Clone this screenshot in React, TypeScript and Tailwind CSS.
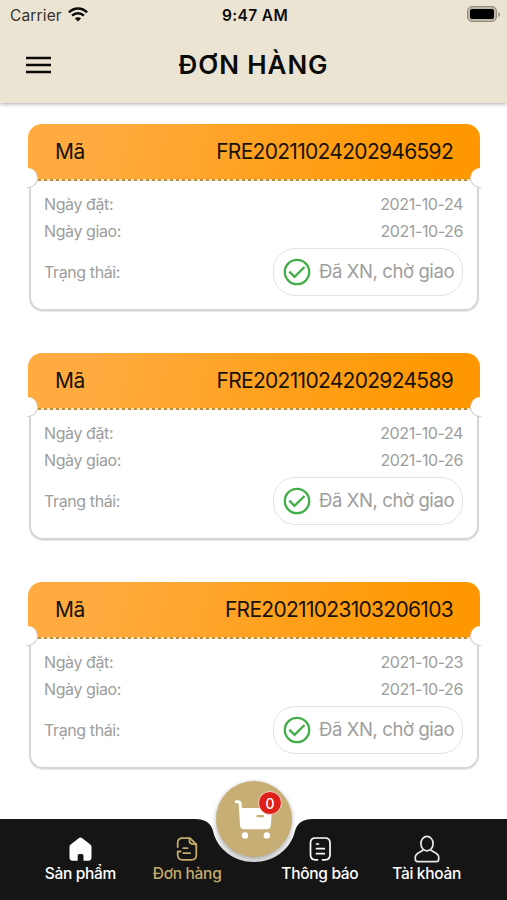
import React from "react";

interface Order {
    code: string,
    orderDate: string,
    shipDate: string,
    status: string,
}

const orders: Order[] = [
    { code: "FRE20211024202946592", orderDate: "2021-10-24", shipDate: "2021-10-26", status: "Đã XN, chờ giao" },
    { code: "FRE20211024202924589", orderDate: "2021-10-24", shipDate: "2021-10-26", status: "Đã XN, chờ giao" },
    { code: "FRE20211023103206103", orderDate: "2021-10-23", shipDate: "2021-10-26", status: "Đã XN, chờ giao" },
];

const WifiIcon = () => (
    <svg width="20" height="15" viewBox="0 0 20 15" fill="none" stroke="#0b0b09" strokeWidth="2.5">
        <path d="M0.9 5.3C6 0.1 14 0.1 19.1 5.3" />
        <path d="M4.1 8.7C7.4 5.4 12.6 5.4 15.9 8.7" />
        <path d="M10 14.6L6.9 11.4C8.6 9.8 11.4 9.8 13.1 11.4Z" fill="#0b0b09" stroke="none" />
    </svg>
);

const MenuIcon = () => (
    <svg width="25" height="18" viewBox="0 0 25 18" stroke="#0b0b09" strokeWidth="2.4">
        <path d="M0 2H25M0 9H25M0 16H25" />
    </svg>
);

const StatusBar = () => (
    <div className="flex h-[30px] items-center">
        <div className="flex flex-1 items-center gap-[6px] pl-[10px] text-[15.5px] tracking-[0.15px] text-[#35322c]">
            <span className="pt-px">Carrier</span>
            <div className="pb-px"><WifiIcon /></div>
        </div>
        <div className="pt-px text-[15.5px] font-semibold tracking-[0.35px]">9:47 AM</div>
        <div className="flex flex-1 items-center justify-end gap-px pr-[7px] pb-[2px]">
            <div className="h-4 w-[30px] rounded-[5px] border border-[#928b7e] bg-[#bdb6a7] p-[2px]">
                <div className="h-full rounded-[2px] bg-black" />
            </div>
            <div className="h-[5px] w-[2px] rounded-r-full bg-[#a8a193]" />
        </div>
    </div>
);

const Header = () => (
    <header className="h-[103px] bg-[#ece4d3] shadow-[0_1px_4px_rgba(0,0,0,0.35)]">
        <StatusBar />
        <div className="flex h-[70px] items-center px-[26px]">
            <button><MenuIcon /></button>
            <h1 className="flex-1 pr-[25px] pb-[2px] text-center text-[26px] font-semibold tracking-[0.9px]">ĐƠN HÀNG</h1>
        </div>
    </header>
);

const CheckIcon = () => (
    <svg width="28" height="28" viewBox="0 0 28 28" fill="none" stroke="#43ae49" strokeWidth="2.3">
        <circle cx="14" cy="14" r="12.2" />
        <path d="M6.3 13.6L11.5 18.8L21.5 9" />
    </svg>
);

const OrderCard = ({ code, orderDate, shipDate, status }: Order) => (
    <article className="relative h-[187px] w-[452px] text-[16px] leading-[27px] text-[#9d9d9d]">
        <div className="flex h-[56px] items-center justify-between rounded-t-[14px] bg-linear-[105deg] from-[#ffab40] from-15% to-[#ff9800] to-90% px-[27px] pb-[2px] text-[21px] text-[#17120a]">
            <span className="tracking-[-0.4px]">Mã</span>
            <span className="tracking-[-0.7px]">{code}</span>
        </div>
        <div className="mx-px h-[131px] rounded-b-[14px] border-x-2 border-b-2 border-[#d6d6d6] pt-[11px] pr-[14px] pl-[13px] shadow-[0_1px_1px_rgba(0,0,0,0.1)]">
            <div className="flex justify-between">
                <span className="tracking-[-0.4px]">Ngày đặt:</span>
                <span className="tracking-[-0.4px]">{orderDate}</span>
            </div>
            <div className="flex justify-between">
                <span className="tracking-[-0.4px]">Ngày giao:</span>
                <span className="tracking-[-0.4px]">{shipDate}</span>
            </div>
            <div className="mt-[3px] flex items-center justify-between">
                <span className="tracking-[-0.4px]">Trạng thái:</span>
                <div className="flex h-[48px] w-[190px] items-center gap-[8px] rounded-[22px] border-[1.5px] border-[#e3e3e3] pl-[9px] text-[18.5px] whitespace-nowrap">
                    <CheckIcon />
                    <span className="pb-[2px] tracking-[-0.4px]">{status}</span>
                </div>
            </div>
        </div>
        <div className="absolute top-[55px] right-[10px] left-[10px] h-[2px] bg-[repeating-linear-gradient(90deg,#b98f3c_0_3px,#f3e3c4_3px_6px)]" />
        {/* punched ticket holes */}
        <div className="absolute top-[44px] left-[-1px] h-[20px] w-[11px] rounded-r-full border-r border-b border-[#d2cdc5] bg-white" />
        <div className="absolute top-[44px] right-[-1px] h-[20px] w-[11px] rounded-l-full border-b border-l border-[#d2cdc5] bg-white" />
    </article>
);

const HomeIcon = () => (
    <svg width="28" height="28" viewBox="0 0 28 28" fill="#fff">
        <path d="M14.5 2.5C15.2 2.5 15.7 2.8 16.3 3.3L24 9.2C25 10 25.5 10.8 25.5 12V22.5C25.5 24.4 24.5 25.8 22.5 25.8H17.5V20.5C17.5 18.6 11.7 18.6 11.7 20.5V25.8H6.5C4.5 25.8 3.5 24.4 3.5 22.5V12C3.5 10.8 4 10 5 9.2L12.7 3.3C13.3 2.8 13.8 2.5 14.5 2.5Z" />
    </svg>
);

const OrderIcon = () => (
    <svg width="28" height="28" viewBox="0 0 28 28" fill="none" stroke="#c4ab6b" strokeWidth="1.8" strokeLinecap="round" strokeLinejoin="round">
        <path d="M4.7 12V8Q4.7 3.2 9.5 3.2H17L23.3 9.5V20Q23.3 24.8 18.5 24.8H9.5Q4.7 24.8 4.7 20V16.5H7.5" />
        <path d="M16.5 3.5V6Q16.5 8.8 19.1 8.8L23 9.5" />
        <path d="M10.3 13.2H14.5M10.3 18.2H17" />
    </svg>
);

const NoticeIcon = () => (
    <svg width="28" height="28" viewBox="0 0 28 28" fill="none" stroke="#fff" strokeWidth="1.7" strokeLinecap="round">
        <path d="M11.5 24.8H9.5Q4.5 24.8 4.5 19.8V8Q4.5 3 9.5 3H19Q24 3 24 8V19.8Q24 24.8 19 24.8H16.5" />
        <path d="M10.5 9H12.5M10.5 13.7H18.3M10.5 18.7H18.3" />
    </svg>
);

const UserIcon = () => (
    <svg width="28" height="28" viewBox="0 0 28 28" fill="none" stroke="#e8e8e8" strokeWidth="1.7" strokeLinejoin="round">
        <ellipse cx="14" cy="8.6" rx="6.1" ry="7.2" />
        <path d="M10.3 14.5C9.5 17 2.3 17.5 2.3 22V24Q2.3 26.6 4.6 26.6H23.4Q25.7 26.6 25.7 24V22C25.7 17.5 18.5 17 17.7 14.5" />
    </svg>
);

const CartIcon = () => (
    <svg width="40" height="42" viewBox="0 0 40 42" fill="#fff">
        <path d="M2.2 3.8H3.6Q6.3 3.8 6.4 6.6V11" fill="none" stroke="#fff" strokeWidth="3" strokeLinecap="round" />
        <path d="M4.9 10H38L36.8 27.5Q36.5 31.3 33 31.3H10Q6.4 31.3 6.1 27.5Z" />
        <path d="M23.5 18.2H29" stroke="#c7ae74" strokeWidth="2.3" strokeLinecap="round" />
        <circle cx="11" cy="37.5" r="3.2" />
        <circle cx="32.8" cy="37.5" r="3.2" />
    </svg>
);

interface TabProps {
    name: string,
    active?: boolean,
    children: React.ReactNode,
}

const Tab = ({ name, active, children }: TabProps) => (
    <div className={`flex w-[107px] flex-col items-center text-[15.5px] leading-[20px] font-medium tracking-[-0.3px] ${active ? "text-[#c4ab6b]" : "text-white"}`}>
        {children}
        <span className="pt-px whitespace-nowrap">{name}</span>
    </div>
);

const BottomBar = () => (
    <nav className="relative h-[81px] shrink-0 bg-[#151515]">
        {/* cradle under the cart button */}
        <svg className="absolute top-0 left-[190px]" width="130" height="46" viewBox="0 0 130 46">
            <defs>
                <linearGradient id="cradle" x1="0" y1="0" x2="0" y2="1">
                    <stop offset="0.1" stopColor="#fff" />
                    <stop offset="1" stopColor="#d9d9d9" />
                </linearGradient>
            </defs>
            <path d="M0 0H5C15 0 21 4 23 12C27 30 44 43 64 43C84 43 101 30 105 12C107 4 113 0 123 0Z" fill="url(#cradle)" />
        </svg>
        <div className="relative flex px-[27px] pt-[16px]">
            <Tab name="Sản phẩm"><HomeIcon /></Tab>
            <Tab name="Đơn hàng" active><OrderIcon /></Tab>
            <div className="w-[26px]" />
            <Tab name="Thông báo"><NoticeIcon /></Tab>
            <Tab name="Tài khoản"><UserIcon /></Tab>
        </div>
        <button className="absolute top-[-38px] left-[216px] flex h-[76px] w-[76px] items-center justify-center rounded-full bg-[#c7ae74] shadow-[0_1px_4px_rgba(0,0,0,0.3)]">
            <CartIcon />
            <span className="absolute top-[10px] left-[42px] flex h-[24px] w-[24px] items-center justify-center rounded-full border-[1.5px] border-[#f6dcd0] bg-[#de2019] text-[14px] font-medium text-white">0</span>
        </button>
    </nav>
);

const App = () => (
    <div className="flex h-[900px] w-[507px] flex-col overflow-hidden bg-white font-['Inter',sans-serif] text-[#0b0b09]">
        <Header />
        <main className="flex flex-1 flex-col gap-[42.2px] pt-[21px] pl-[28px]">
            {orders.map((order) => <OrderCard key={order.code} {...order} />)}
        </main>
        <BottomBar />
    </div>
);

export default App;
